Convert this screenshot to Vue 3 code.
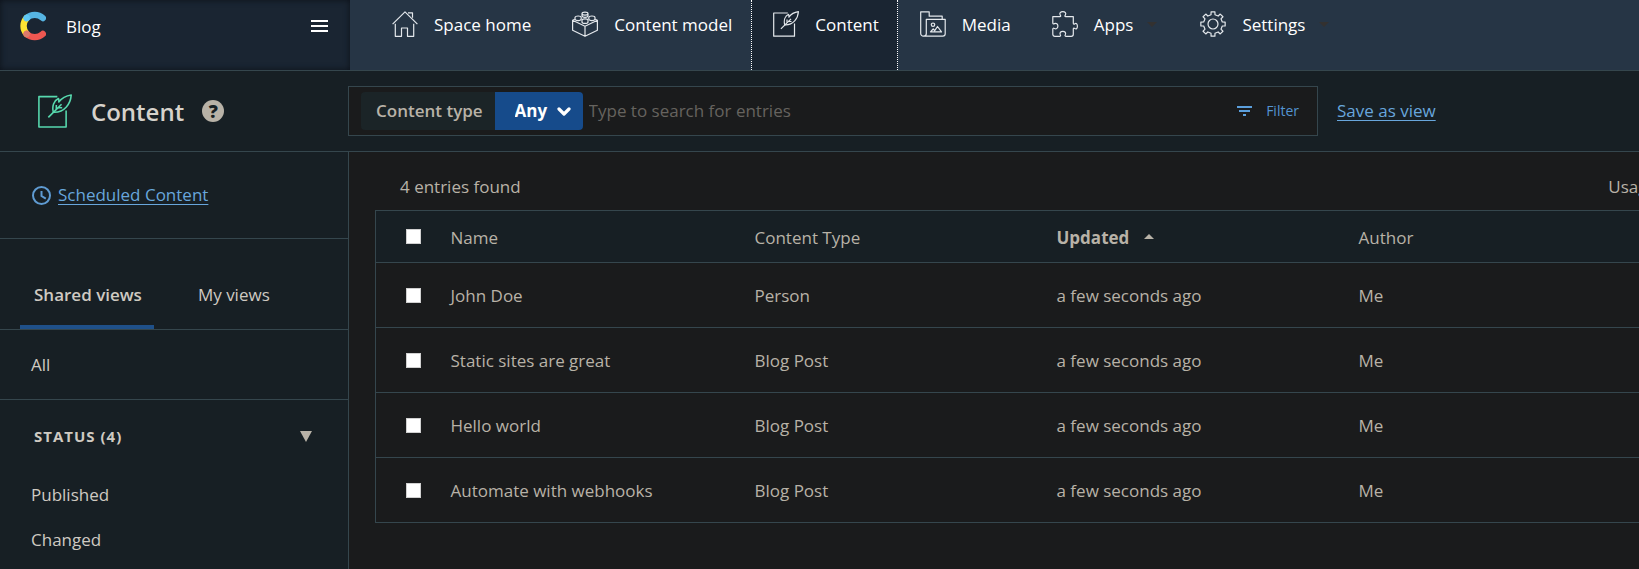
<script setup>
import { ref } from 'vue'

const point = (radius, degrees) => {
  const a = (degrees * Math.PI) / 180
  return `${(13 + radius * Math.sin(a)).toFixed(2)} ${(13 - radius * Math.cos(a)).toFixed(2)}`
}
const gear = 'M' + Array.from({ length: 8 }, (_, i) => i * 45)
  .map((a) => [point(9.5, a - 12), point(12.3, a - 9), point(12.3, a + 9), point(9.5, a + 12)].join('L'))
  .join('L') + 'Z'

const quill = [
  'M14.8 2H.7v23.2h20.8V12.6',
  'M7.9 17.9 18 7.8',
  'M11.7 13.9C10.6 9.4 12 5 15.6 3.4c.5 1 .4 1.8.3 2.7C18 3.2 21 1.3 25.4.7 25 7.2 20.5 14.3 11.7 13.9Z',
  'M14 11.5V8.5M15 10.5h3.5',
]

const navItems = [
  { label: 'Space home', paths: ['M.6 13.2 13 .8l12.4 12.4', 'M3.3 12.7v12.6h6.2V17h6v8.3h6.2V12.7', 'M16 1.8h4.5v5'] },
  {
    label: 'Content model',
    paths: [
      'M2.8 8.200.6 9.200v10L13 25.300l12.400-6.100v-10l-2.200-1M.6 9.200 13 15.200l12.400-6M13 15.200v10.100',
      'M10 2.600a3 1.500 0 1 0 6 0a3 1.500 0 1 0-6 0v2.200a3 1.500 0 0 0 6 0V2.600',
      'M9.200 6.500a3.100 1.500 0 1 0-6.200 0v1.600a3.100 1.500 0 0 0 6.200 0Z',
      'M23 6.500a3.100 1.500 0 1 0-6.200 0v1.600a3.100 1.500 0 0 0 6.200 0Z',
      'M16 9.300a3 1.500 0 1 0-6 0v1.600a3 1.500 0 0 0 6 0Z',
    ],
  },
  { label: 'Content', active: true, paths: quill },
  {
    label: 'Media',
    paths: [
      'M6.3 22.5V8.3h18.9v14.5a2.4 2.4 0 0 1-2.4 2.4H3.4A2.7 2.7 0 0 1 .7 22.5V.8h8.5v4.4h13v3M6.3 22.5a2.7 2.7 0 0 1-2.7 2.7',
      'M14.7 13.7a1.7 1.7 0 1 1-3.4 0a1.7 1.7 0 1 1 3.4 0',
      'M10.5 20.9h11l-4-5.4-2.8 4.2-1.5-1.7Z',
    ],
  },
  {
    label: 'Apps',
    caret: true,
    paths: [
      'M.8 5.7h7c1.2 0 1-.9.5-1.6C7 2.2 8.6.7 10.8.7s3.8 1.5 2.5 3.4c-.5.7-.7 1.6.5 1.6h7.5v6.5c0 1.2.9 1 1.6.5 1.5-.9 2.5.4 2.5 2.5s-1 3.3-2.5 2.4c-.7-.5-1.6-.7-1.6.5v5.2a2 2 0 0 1-2 2h-5.5c-1 0-.9-.9-.5-1.6 1-2.1-.5-3.3-2.5-3.3s-3.5 1.2-2.5 3.3c.4.7.5 1.6-.5 1.6H2.8a2 2 0 0 1-2-2v-5.2c0-1.1.8-1 1.6-.6 2 1 3.5-.5 3.5-2.4S4.400 11.600 2.400 12.600c-.8.4-1.600.5-1.600-.6Z',
    ],
  },
  { label: 'Settings', caret: true, paths: [gear, 'M18 13a5 5 0 1 1-10 0a5 5 0 1 1 10 0'] },
]

const entries = [
  { name: 'John Doe', type: 'Person' },
  { name: 'Static sites are great', type: 'Blog Post' },
  { name: 'Hello world', type: 'Blog Post' },
  { name: 'Automate with webhooks', type: 'Blog Post' },
]
const statuses = ['Published', 'Changed']
const query = ref('')
</script>

<template>
  <div class="page">
    <header class="topbar">
      <div class="space">
        <svg class="logo" viewBox="0 0 26 30" fill="none" stroke-width="6.4" stroke-linecap="round">
          <path d="M6.7 7A11.7 11.7 0 0 0 6.7 23" stroke="#fde433" />
          <path d="M6.7 7A11.8 11.8 0 0 1 22.8 7" stroke="#56b4e2" />
          <path d="M6.7 23A11.8 11.8 0 0 0 22.8 23" stroke="#ee5751" />
          <circle cx="6.7" cy="7" r="3.2" fill="#5fc8f5" />
          <circle cx="6.7" cy="23" r="3.2" fill="#db7a6c" />
        </svg>
        <span class="space-name">Blog</span>
        <button class="menu" aria-label="Menu" type="button">
          <svg viewBox="0 0 17 12"><path d="M0 1h17M0 6h17M0 11h17" stroke="#fff" stroke-width="2" /></svg>
        </button>
      </div>
      <nav class="nav">
        <a v-for="item in navItems" :key="item.label" href="#" class="nav-item" :class="{ active: item.active }">
          <svg class="nav-icon" viewBox="0 0 26 26"><path v-for="d in item.paths" :key="d" :d="d" /></svg>
          <span class="nav-label">{{ item.label }}</span>
          <i v-if="item.caret" class="nav-caret"></i>
        </a>
      </nav>
    </header>

    <div class="workbench">
      <div class="title">
        <svg class="title-icon" viewBox="0 0 26 26"><path v-for="d in quill" :key="d" :d="d" /></svg>
        <h1>Content</h1>
        <button class="help" type="button" aria-label="Help">?</button>
      </div>
      <div class="search">
        <label class="pill" for="type">Content type</label>
        <div class="type">
          <select id="type"><option>Any</option></select>
          <svg viewBox="0 0 14 9"><path d="m2 2 5 5 5-5" fill="none" stroke="#fff" stroke-width="3.2" stroke-linecap="round" stroke-linejoin="round" /></svg>
        </div>
        <input v-model="query" class="query" type="text" aria-label="Search" placeholder="Type to search for entries">
        <button class="filter" type="button">
          <svg viewBox="0 0 15 10"><path d="M0 1h15M2 5h11M6 9h3" stroke="#5b9fdc" stroke-width="2" /></svg>
          Filter
        </button>
      </div>
      <a class="save" href="#">Save as view</a>
    </div>

    <div class="body">
      <aside class="sidebar">
        <div class="scheduled">
          <svg viewBox="0 0 19 19"><circle cx="9.5" cy="9.5" r="8.5" /><path d="M9.5 5v5l4.3 2.7" /></svg>
          <a href="#">Scheduled Content</a>
        </div>
        <div class="tabs">
          <button class="tab selected" type="button">Shared views</button>
          <button class="tab" type="button">My views</button>
        </div>
        <a class="all" href="#">All</a>
        <button class="status" type="button">
          Status (4)
          <svg viewBox="0 0 12 11"><path d="M0 0h12L6 11Z" fill="#b8b2a7" /></svg>
        </button>
        <a v-for="s in statuses" :key="s" class="view" href="#">{{ s }}</a>
      </aside>

      <main class="main">
        <div class="summary"><span>4 entries found</span><span>Usage</span></div>
        <table>
          <colgroup><col class="c-check"><col class="c-name"><col class="c-data"><col class="c-data"><col></colgroup>
          <thead>
            <tr>
              <th><input type="checkbox" aria-label="Select all"></th>
              <th>Name</th>
              <th>Content Type</th>
              <th class="sorted">Updated <i class="sort"></i></th>
              <th>Author</th>
            </tr>
          </thead>
          <tbody>
            <tr v-for="e in entries" :key="e.name">
              <td><input type="checkbox" :aria-label="'Select ' + e.name"></td>
              <td>{{ e.name }}</td>
              <td>{{ e.type }}</td>
              <td>a few seconds ago</td>
              <td>Me</td>
            </tr>
          </tbody>
        </table>
      </main>
    </div>
  </div>
</template>

<style>
body {
  background: #1a1b1c;
}
</style>

<style scoped>
* {
  box-sizing: border-box;
}
.page {
  display: flex;
  flex-direction: column;
  height: 100vh;
  overflow: hidden;
  font-family: "Open Sans", "Noto Sans", sans-serif;
  font-size: 17px;
  line-height: 24px;
  color: #b8b2a7;
  white-space: nowrap;
}
button, input, select {
  font: inherit;
  color: inherit;
  background: none;
  border: 0;
  margin: 0;
  padding: 0;
}
a {
  color: inherit;
}
.topbar {
  display: flex;
  height: 71px;
  flex: none;
  background: #263545;
  border-bottom: 1px solid #35464d;
  color: #fff;
}
.space {
  display: flex;
  align-items: center;
  flex: none;
  width: 350px;
  padding: 0 22px 18px 20px;
  background: #1a2532;
  box-shadow: inset 0 0 6px #0c1219;
}
.logo {
  width: 26px;
  height: 30px;
}
.space-name {
  margin-left: 20px;
  padding-top: 2px;
}
.menu {
  margin-left: auto;
  display: flex;
}
.menu svg {
  width: 17px;
  height: 12px;
}
.nav {
  display: flex;
  padding-left: 20px;
}
.nav-item {
  display: flex;
  align-items: center;
  padding: 0 18px 22px 21px;
  border: 1px dotted transparent;
  border-width: 0 1px;
  text-decoration: none;
}
.nav-item.active {
  background: #1a2532;
  border-color: #fff;
}
.nav-icon {
  width: 26px;
  height: 26px;
  margin-right: 16px;
}
.nav-label {
  padding-top: 2px;
}
.nav-icon, .title-icon {
  flex: none;
  fill: none;
  stroke: #e4e8ec;
  stroke-width: 1.2;
  stroke-linejoin: round;
}
.nav-caret {
  margin-left: 14px;
  margin-right: 2px;
  border: 5px solid transparent;
  border-top-color: #333130;
  border-bottom: 0;
}
.workbench {
  display: flex;
  align-items: center;
  flex: none;
  height: 81px;
  background: #171f24;
  border-bottom: 1px solid #35464d;
}
.title {
  display: flex;
  align-items: center;
  flex: none;
  width: 348px;
  padding-left: 38px;
}
.title-icon {
  width: 34px;
  height: 34px;
  stroke: #57d9ae;
}
h1 {
  margin: 0 18px 0 19px;
  padding-top: 2px;
  font-size: 24px;
  line-height: 32px;
  font-weight: 600;
  color: #d6d2cb;
}
.help {
  width: 22px;
  height: 22px;
  border-radius: 50%;
  background: #b8b2a7;
  color: #171f24;
  font-size: 18px;
  line-height: 22px;
  font-weight: 800;
}
.search {
  display: flex;
  align-items: center;
  flex: 0 1 970px;
  height: 50px;
  padding: 0 18px 0 12px;
  background: #1a1b1c;
  border: 1px solid #35464d;
}
.pill {
  padding: 0 12px 0 15px;
  line-height: 38px;
  font-weight: 600;
  background: #1b2427;
  border-radius: 4px 0 0 4px;
}
.type {
  display: grid;
  align-items: center;
  width: 88px;
  height: 38px;
  background: #164b8b;
  border-radius: 0 4px 4px 0;
}
.type > * {
  grid-area: 1 / 1;
}
.type select {
  appearance: none;
  height: 38px;
  padding-left: 20px;
  color: #fff;
  font-weight: 700;
}
.type svg {
  justify-self: end;
  width: 14px;
  height: 9px;
  margin-right: 12px;
  pointer-events: none;
}
.query {
  flex: 1;
  min-width: 0;
  padding-left: 6px;
}
.query::placeholder {
  color: #66635f;
  opacity: 1;
}
.filter {
  display: flex;
  align-items: center;
  gap: 14px;
  color: #5494d2;
  font-size: 14px;
}
.filter svg {
  width: 15px;
  height: 10px;
}
.save, .scheduled a {
  color: #68a6dc;
  text-underline-offset: 3px;
}
.save {
  margin-left: 19px;
}
.body {
  display: flex;
  flex: 1;
  min-height: 0;
}
.sidebar {
  display: flex;
  flex-direction: column;
  flex: none;
  width: 349px;
  background: #171f24;
  border-right: 1px solid #35464d;
  color: #cfcac2;
}
.scheduled {
  display: flex;
  align-items: center;
  gap: 7px;
  height: 87px;
  padding-left: 32px;
  border-bottom: 1px solid #35464d;
}
.scheduled svg {
  width: 19px;
  height: 19px;
  fill: none;
  stroke: #5f9bd2;
  stroke-width: 2;
}
.tabs {
  display: flex;
  align-items: flex-end;
  gap: 30px;
  height: 91px;
  padding-left: 20px;
  border-bottom: 1px solid #35464d;
}
.tab {
  height: 68px;
  padding: 0 12px 0 14px;
}
.tab.selected {
  font-weight: 600;
  box-shadow: inset 0 -4px #1f5089;
}
.all {
  padding-left: 31px;
  line-height: 69px;
  border-bottom: 1px solid #35464d;
  text-decoration: none;
}
.status {
  display: flex;
  align-items: center;
  justify-content: space-between;
  height: 72px;
  padding: 0 36px 0 34px;
  font-size: 15px;
  font-weight: 700;
  letter-spacing: 1px;
  text-transform: uppercase;
}
.status svg {
  width: 12px;
  height: 11px;
}
.view {
  padding-left: 31px;
  line-height: 45px;
  text-decoration: none;
}
.main {
  flex: 1;
  min-width: 0;
  padding: 23px 0 0 26px;
  overflow: hidden;
}
.summary {
  display: flex;
  justify-content: space-between;
  width: calc(100% + 18px);
  padding-left: 25px;
  margin-bottom: 11px;
}
table {
  width: calc(100% + 80px);
  table-layout: fixed;
  border-collapse: collapse;
  border: 1px solid #35464d;
}
.c-check {
  width: 75px;
}
.c-name {
  width: 304px;
}
.c-data {
  width: 302px;
}
tr {
  height: 65px;
  border-bottom: 1px solid #35464d;
}
thead tr {
  height: 52px;
  background: #171f24;
}
th, td {
  padding: 2px 0 0;
  text-align: left;
  font-weight: 400;
}
th.sorted {
  font-weight: 700;
}
td:first-child, th:first-child {
  padding: 0 0 0 30px;
}
.sort {
  display: inline-block;
  margin-left: 10px;
  vertical-align: 5px;
  border: 5px solid transparent;
  border-bottom-color: #b8b2a7;
  border-top: 0;
}
input[type="checkbox"] {
  display: block;
  appearance: none;
  width: 15px;
  height: 15px;
  background: #fff;
  border: 1px solid #d0d0d0;
}
</style>
